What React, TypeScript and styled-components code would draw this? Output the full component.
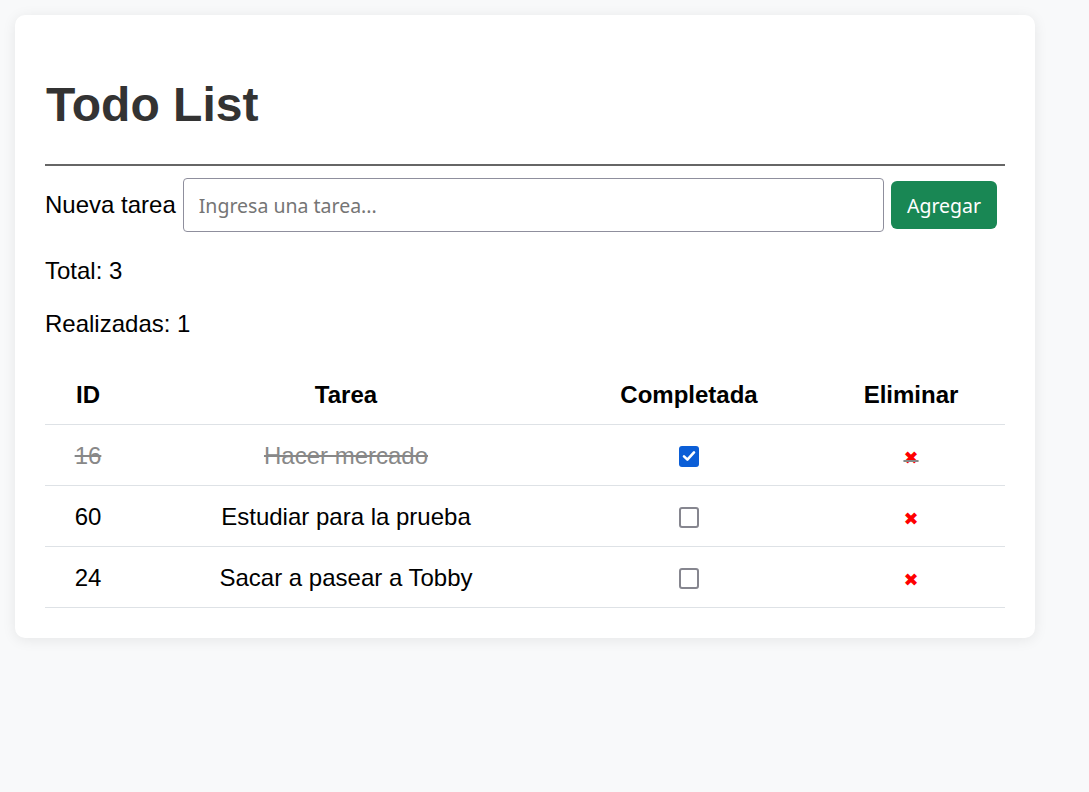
import React, { useState } from "react";
import styled, { createGlobalStyle } from "styled-components";

const Global = createGlobalStyle`
  html, body { margin: 0; padding: 0; }
  body {
    background: #f8f9fa;
    font-family: "Liberation Sans", Arial, sans-serif;
    font-size: 24px;
    color: #000;
    min-height: 792px;
  }
`;

const Page = styled.div`
  padding: 15px;
`;

const Card = styled.div`
  width: 1020px;
  box-sizing: border-box;
  background: #fff;
  border-radius: 10px;
  box-shadow: 0 2px 14px rgba(0, 0, 0, 0.08);
  padding: 30px;
`;

const Title = styled.h1`
  margin: 32px 0 32px 1px;
  font-size: 48px;
  line-height: 55px;
  font-weight: 700;
  color: #333;
`;

const Rule = styled.hr`
  margin: 0;
  border: none;
  height: 2px;
  background: #666;
`;

const FormRow = styled.div`
  display: flex;
  align-items: center;
  margin-top: 12px;
  padding-right: 8px;
`;

const Label = styled.label`
  font-size: 24px;
  line-height: 28px;
  margin-right: 7px;
  white-space: nowrap;
`;

const TextInput = styled.input`
  flex: 1;
  height: 54px;
  box-sizing: border-box;
  border: 1px solid #8f8f9d;
  border-radius: 4px;
  padding: 0 15px;
  font-family: "Noto Sans", "DejaVu Sans", sans-serif;
  font-size: 19.5px;
  color: #222;
  outline: none;
  &::placeholder { color: #757575; }
`;

const AddButton = styled.button`
  margin-left: 7px;
  height: 48px;
  width: 106px;
  border: none;
  border-radius: 6px;
  background: #198754;
  color: #fff;
  font-family: "Noto Sans", "DejaVu Sans", sans-serif;
  font-size: 19.5px;
  cursor: pointer;
`;

const Stats = styled.div`
  display: flex;
  flex-direction: column;
  gap: 25px;
  margin-top: 25px;
`;

const Stat = styled.p`
  margin: 0;
  font-size: 24px;
  line-height: 28px;
`;

const Table = styled.table`
  width: 960px;
  margin-top: 26px;
  border-collapse: collapse;
  table-layout: fixed;
`;

const Th = styled.th<{ $w: number }>`
  width: ${(p) => p.$w}px;
  font-size: 24px;
  font-weight: 700;
  line-height: 28px;
  padding: 17px 0 15px;
  text-align: center;
  border-bottom: 1px solid #dee2e6;
`;

const Td = styled.td<{ $done: boolean }>`
  font-size: 24px;
  line-height: 28px;
  height: 28px;
  padding: 17px 0 15px;
  text-align: center;
  vertical-align: middle;
  border-bottom: 1px solid #dee2e6;
  color: ${(p) => (p.$done ? "#888" : "#000")};
  text-decoration: ${(p) => (p.$done ? "line-through" : "none")};
`;

const Check = styled.span<{ $on: boolean }>`
  display: flex;
  align-items: center;
  justify-content: center;
  margin: 0 auto;
  width: 20px;
  height: 21px;
  box-sizing: border-box;
  border-radius: 3px;
  border: ${(p) => (p.$on ? "none" : "2px solid #86868f")};
  background: ${(p) => (p.$on ? "#0b5ed7" : "#fff")};
  cursor: pointer;
`;

const Remove = styled.span`
  font-family: "DejaVu Sans", sans-serif;
  font-size: 18px;
  line-height: 20px;
  color: #f00;
  cursor: pointer;
`;

type Todo = { id: number; text: string; done: boolean };

export default function App() {
  const [todos, setTodos] = useState<Todo[]>([
    { id: 16, text: "Hacer mercado", done: true },
    { id: 60, text: "Estudiar para la prueba", done: false },
    { id: 24, text: "Sacar a pasear a Tobby", done: false },
  ]);
  const [value, setValue] = useState("");

  const add = () => {
    if (!value.trim()) return;
    setTodos([...todos, { id: Math.floor(Math.random() * 100), text: value, done: false }]);
    setValue("");
  };

  return (
    <>
      <Global />
      <Page>
        <Card>
          <Title>Todo List</Title>
          <Rule />
          <FormRow>
            <Label htmlFor="task">Nueva tarea</Label>
            <TextInput
              id="task"
              placeholder="Ingresa una tarea..."
              value={value}
              onChange={(e) => setValue(e.target.value)}
            />
            <AddButton onClick={add}>Agregar</AddButton>
          </FormRow>
          <Stats>
            <Stat>Total: {todos.length}</Stat>
            <Stat>Realizadas: {todos.filter((t) => t.done).length}</Stat>
          </Stats>
          <Table>
            <thead>
              <tr>
                <Th $w={86}>ID</Th>
                <Th $w={430}>Tarea</Th>
                <Th $w={256}>Completada</Th>
                <Th $w={188}>Eliminar</Th>
              </tr>
            </thead>
            <tbody>
              {todos.map((t) => (
                <tr key={t.id + t.text}>
                  <Td $done={t.done}>{t.id}</Td>
                  <Td $done={t.done}>{t.text}</Td>
                  <Td $done={t.done}>
                    <Check
                      $on={t.done}
                      onClick={() =>
                        setTodos(todos.map((x) => (x === t ? { ...x, done: !x.done } : x)))
                      }
                    >
                      {t.done && (
                        <svg width="16" height="16" viewBox="0 0 16 16">
                          <path
                            d="M3 8.4 L6.4 11.6 L13 4.4"
                            fill="none"
                            stroke="#fff"
                            strokeWidth="2.6"
                            strokeLinecap="round"
                            strokeLinejoin="round"
                          />
                        </svg>
                      )}
                    </Check>
                  </Td>
                  <Td $done={t.done}>
                    <Remove onClick={() => setTodos(todos.filter((x) => x !== t))}>
                      {"\u2716\uFE0E"}
                    </Remove>
                  </Td>
                </tr>
              ))}
            </tbody>
          </Table>
        </Card>
      </Page>
    </>
  );
}
